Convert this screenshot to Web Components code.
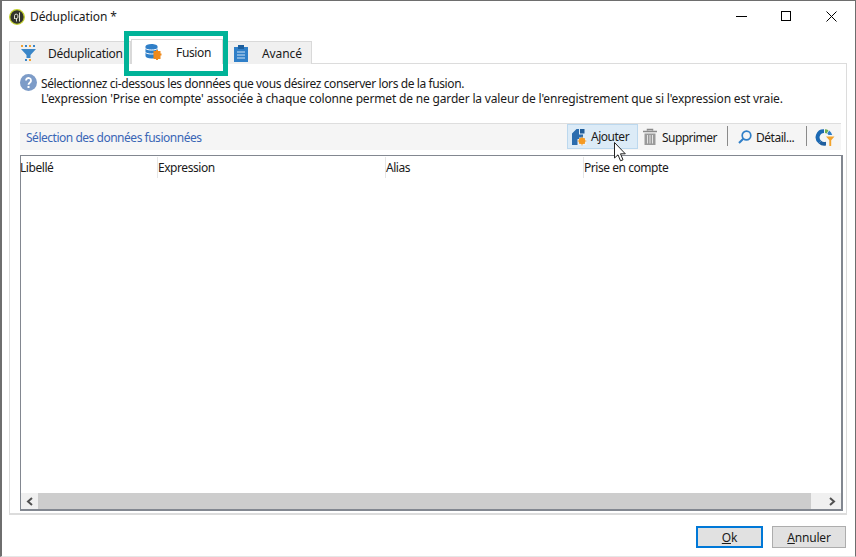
<!DOCTYPE html>
<html lang="fr">
<head>
<meta charset="utf-8">
<title>Déduplication</title>
<style>
  html, body { margin: 0; height: 100%; background: #fff; }
  body { font: 12px "Noto Sans", "Open Sans", sans-serif; color: #1a1a1a; overflow: hidden; }
</style>
</head>
<body>
<dedup-window>
  <dialog-tabs></dialog-tabs>
  <info-note>
    <span style="letter-spacing:-.4px">Sélectionnez ci-dessous les données que vous désirez conserver lors de la fusion.</span>
    <span style="letter-spacing:-.17px">L'expression 'Prise en compte' associée à chaque colonne permet de ne garder la valeur de l'enregistrement que si l'expression est vraie.</span>
  </info-note>
  <merge-toolbar></merge-toolbar>
  <data-table></data-table>
</dedup-window>

<script>
class DedupWindow extends HTMLElement {
    constructor() {
        super();
        this.attachShadow({ mode: "open" }).innerHTML = `
        <style>
            :host { display: flex; flex-direction: column; width: 856px; height: 557px; box-sizing: border-box; border: solid #6e6e6e; border-width: 1px 1px 0 2px; border-bottom: 1px solid #e6e6e6; }
            .title { display: flex; align-items: center; height: 31px; flex: none; padding-left: 7px; gap: 5px; font-size: 12px; letter-spacing: -.1px; }
            .controls { margin-left: auto; display: flex; padding-right: 1px; }
            .controls span { width: 45px; height: 30px; display: flex; align-items: center; justify-content: center; }
            .tabs { margin: 7px 8px 0 7px; flex: none; }
            .panel { flex: none; margin: 0 8px 0 7px; height: 452px; box-sizing: border-box; border: 1px solid #dcdcdc; border-bottom-width: 2px; padding: 6px 4px 0 10px; display: flex; flex-direction: column; }
            .footer { flex: 1; display: flex; justify-content: flex-end; align-items: flex-start; gap: 9px; padding: 11px 9px 0 0; }
        </style>
        <div class="title">
            <svg width="16" height="16" viewBox="0 0 16 16"><circle cx="8" cy="8" r="7.300" fill="#33352c" stroke="#c3d12f" stroke-width="1.300"/><path d="M5.500 10V6.800a1.700 1.700 0 0 1 3.400 0v1.400a1.700 1.700 0 0 1-3 1" fill="none" stroke="#e2e2d6" stroke-width="1"/><path d="M10.500 3.500v9M7.500 9v3.500" stroke="#e2e2d6" stroke-width="1"/></svg>
            <span>Déduplication *</span>
            <div class="controls">
                <span><svg width="11" height="11"><path d="M0 5.500h11" stroke="#000"/></svg></span>
                <span><svg width="11" height="11"><rect x=".5" y=".5" width="9" height="9" fill="none" stroke="#000"/></svg></span>
                <span><svg width="11" height="11"><path d="M.5.500l10 10M10.500.500l-10 10" stroke="#000"/></svg></span>
            </div>
        </div>
        <div class="tabs"><slot name="tabs"></slot></div>
        <div class="panel"><slot></slot></div>
        <div class="footer">
            <dialog-button primary width="67"><u>O</u>k</dialog-button>
            <dialog-button width="74"><u>A</u>nnuler</dialog-button>
        </div>`;
    }
}

class DialogTabs extends HTMLElement {
    constructor() {
        super();
        this.attachShadow({ mode: "open" }).innerHTML = `
        <style>
            :host { display: block; position: relative; }
            .row { display: flex; align-items: flex-end; height: 25px; margin-bottom: -1px; }
            .tab { box-sizing: border-box; height: 23px; border: 1px solid #d9d9d9; border-bottom: 0; background: #f0f0f0; display: flex; align-items: center; font-size: 12px; }
            .tab svg { flex: none; }
            .a { width: 122px; padding-left: 10px; gap: 10px; letter-spacing: -.3px; }
            .b { width: 92px; height: 25px; background: #fff; padding-left: 12px; gap: 13px; position: relative; z-index: 1; letter-spacing: -.35px; }
            .c { width: 89px; padding-left: 10px; gap: 14px; letter-spacing: -.1px; }
            .mark { position: absolute; left: 115px; top: -8px; width: 94px; height: 35px; border: 5px solid #00b398; z-index: 2; pointer-events: none; }
        </style>
        <div class="row">
            <div class="tab a">
                <svg width="18" height="18" viewBox="0 0 18 18"><g fill="#f0a030"><rect x="1" y="1" width="2" height="2"/><rect x="9" y="1" width="2" height="2"/></g><g fill="#3a86c8"><rect x="5" y="1" width="2" height="2"/><rect x="13" y="1" width="2" height="2"/><path d="M1 5h15l-5.500 6v3h-4v-3z"/></g><rect x="5" y="15" width="2" height="2" fill="#3a86c8"/><rect x="9" y="15" width="2" height="2" fill="#f0a030"/></svg>
                <span>Déduplication</span>
            </div>
            <div class="tab b">
                <svg width="19" height="18" viewBox="0 0 18 18"><path d="M1 3.500C1 2 3.500 1 7 1s6 1 6 2.500V13c0 1.500-2.500 2.500-6 2.500S1 14.500 1 13z" fill="#2f7fc8"/><path d="M1 5.500c2 2 10 2 12 0M1 9.500c2 2 10 2 12 0" fill="none" stroke="#fff"/><path d="M9 8h2.500V7h2v1H16v2.500h1v2h-1V16h-2.500v1h-2v-1H9z" fill="#f08a1c"/></svg>
                <span>Fusion</span>
            </div>
            <div class="tab c">
                <svg width="14" height="18" viewBox="0 0 14 18"><path d="M0 3h14v15H0z" fill="#2f7fc8"/><path d="M4 1h6v4H4z" fill="#1d5f9e"/><path d="M3 8h8M3 11h8M3 14h8" stroke="#cfe3f5"/></svg>
                <span>Avancé</span>
            </div>
        </div>
        <div class="mark"></div>`;
    }
}

class InfoNote extends HTMLElement {
    constructor() {
        super();
        this.attachShadow({ mode: "open" }).innerHTML = `
        <style>
            :host { display: flex; gap: 4px; height: 53px; flex: none; font-size: 12px; }
            svg { flex: none; margin-top: 4px; }
            .lines { display: flex; flex-direction: column; line-height: 15px; padding-top: 6px; }
            ::slotted(span) { display: block; white-space: nowrap; height: 15px; }
        </style>
        <svg width="17" height="17" viewBox="0 0 17 17"><circle cx="8.500" cy="8.500" r="8.500" fill="#7d9cc8"/><path d="M6 6.500a2.500 2.500 0 1 1 4 2c-1 .8-1.500 1.100-1.500 2.200" fill="none" stroke="#fff" stroke-width="1.800"/><rect x="7.500" y="12" width="2" height="2" fill="#fff"/></svg>
        <div class="lines"><slot></slot></div>`;
    }
}

class MergeToolbar extends HTMLElement {
    constructor() {
        super();
        this.attachShadow({ mode: "open" }).innerHTML = `
        <style>
            :host { display: flex; align-items: stretch; height: 27px; box-sizing: border-box; flex: none; background: #f5f5f5; border-top: 1px solid #dedede; font-size: 12px; letter-spacing: -.48px; margin-right: 1px; position: relative; }
            .label { color: #3a66b5; padding-left: 6px; align-self: center; margin-right: auto; }
            .btn { display: flex; align-items: center; gap: 5px; }
            .add { width: 71px; box-sizing: border-box; margin-bottom: 1px; padding-left: 3px; gap: 3px; background: #dcebf7; border: 1px solid #bcd8ee; }
            .del { width: 89px; padding-left: 4px; gap: 4px; box-sizing: border-box; letter-spacing: -.55px; }
            .det { width: 78px; padding-left: 10px; gap: 4px; box-sizing: border-box; }
            .sep { width: 1px; background: #8a8a8a; margin: 2px 0 4px; }
            .last { width: 34px; padding-left: 8px; box-sizing: border-box; }
            svg { flex: none; }
            .cursor { position: absolute; left: 594px; top: 18px; z-index: 3; }
        </style>
        <span class="label">Sélection des données fusionnées</span>
        <div class="btn add">
            <svg width="17" height="18" viewBox="0 0 17 18"><path d="M1 5.500L5.500 1H8v5.500h4V9.500H8V17H1z" fill="#2a6cae"/><rect x="9" y="1" width="4.500" height="4.500" fill="#1f5c99"/><path d="M6.500 11h9v6h-9z" fill="#eaf2f9"/><circle cx="11" cy="13" r="3.300" fill="#f59a23"/><path d="M11 8.500v9M6.500 13h9M8 10l6 6M14 10l-6 6" stroke="#f59a23" stroke-opacity=".7"/></svg>
            <span>Ajouter</span>
        </div>
        <div class="btn del">
            <svg width="16" height="18" viewBox="0 0 16 18"><path d="M5.500 2.500v-1h5v1M1 3.500h14" fill="none" stroke="#8a8a8a" stroke-width="1.500"/><path d="M2.500 5.500h11V17h-11z" fill="#9a9a9a"/><path d="M5.500 7v8.500M8 7v8.500M10.500 7v8.500" stroke="#e4e4e4"/></svg>
            <span>Supprimer</span>
        </div>
        <div class="sep"></div>
        <div class="btn det">
            <svg width="14" height="14" viewBox="0 0 14 14"><circle cx="8.500" cy="5.500" r="4.300" fill="none" stroke="#2f7fc8" stroke-width="1.700"/><path d="M5.300 8.700L1 13" stroke="#2f7fc8" stroke-width="2"/></svg>
            <span>Détail...</span>
        </div>
        <div class="sep"></div>
        <div class="btn last">
            <svg width="20" height="19" viewBox="0 0 20 19"><path d="M9 1.200A8 8 0 0 0 3.700 15.500L6.200 12.800A4.400 4.400 0 0 1 9 5z" fill="#1c69b3"/><path d="M3.700 15.500A8 8 0 0 0 11 17.500V13.700A4.400 4.400 0 0 1 6.200 12.800z" fill="#1f5e9e"/><path d="M10 1.200a8 8 0 0 1 3.500 1l-1.800 3.200A4.400 4.400 0 0 0 10 5z" fill="#6fae4f"/><path d="M14.200 2.600a8 8 0 0 1 3 4.400h-3.700a4.400 4.400 0 0 0-1.200-1.500z" fill="#2f7fc8"/><path d="M11 8.500h8.500l-3.300 3.700V18h-1.900v-5.800z" fill="#f2a32c"/></svg>
        </div>
        <svg class="cursor" width="13" height="20" viewBox="0 0 13 20"><path d="M.5.500v15.500l3.500-3.200 2.500 6 2.500-1-2.500-6h4.800z" fill="#fff" stroke="#222" stroke-width="1"/></svg>`;
    }
}

class DataTable extends HTMLElement {
    constructor() {
        super();
        this.attachShadow({ mode: "open" }).innerHTML = `
        <style>
            :host { display: flex; flex-direction: column; height: 356px; box-sizing: border-box; margin-top: 5px; border: 1px solid #828790; border-width: 1px 2px 2px 1px; flex: none; background: #fff; font-size: 12px; letter-spacing: -.45px; margin-right: -1px; }
            .head { display: grid; grid-template-columns: 137px 228px 198px 1fr; height: 22px; padding-top: 1px; box-sizing: border-box; }
            .head span { border-right: 1px solid #e6e6e6; line-height: 22px; height: 21px; box-sizing: border-box; }
            .head span:first-child { margin-left: -1px; }
            .head span:last-child { border: 0; }
            .body { flex: 1; }
            .scroll { display: grid; grid-template-columns: 17px 1fr 47px; height: 16px; background: #f0f0f0; margin-bottom: 0; }
            .scroll .arrow { display: flex; align-items: center; justify-content: center; }
            .thumb { background: #cdcdcd; margin-right: -17px; }
        </style>
        <div class="head"><span>Libellé</span><span>Expression</span><span>Alias</span><span>Prise en compte</span></div>
        <div class="body"></div>
        <div class="scroll">
            <div class="arrow"><svg width="8" height="9"><path d="M6 1L2 4.500 6 8" fill="none" stroke="#505050" stroke-width="2"/></svg></div>
            <div class="thumb"></div>
            <div class="arrow" style="justify-content:flex-end;padding-right:5px"><svg width="8" height="9"><path d="M2 1l4 3.500L2 8" fill="none" stroke="#505050" stroke-width="2"/></svg></div>
        </div>`;
    }
}

class DialogButton extends HTMLElement {
    constructor() {
        super();
        const w = this.getAttribute("width");
        this.attachShadow({ mode: "open" }).innerHTML = `
        <style>
            :host { display: flex; align-items: center; justify-content: center; box-sizing: border-box; width: ${w}px; height: 22px; background: #e1e1e1; border: 1px solid #adadad; font-size: 12px; letter-spacing: -.2px; }
            :host([primary]) { border: 2px solid #0078d7; }
        </style>
        <slot></slot>`;
    }
}

customElements.define("dedup-window", DedupWindow);
customElements.define("dialog-tabs", DialogTabs);
customElements.define("info-note", InfoNote);
customElements.define("merge-toolbar", MergeToolbar);
customElements.define("data-table", DataTable);
customElements.define("dialog-button", DialogButton);
document.querySelector("dialog-tabs").slot = "tabs";
</script>
</body>
</html>
